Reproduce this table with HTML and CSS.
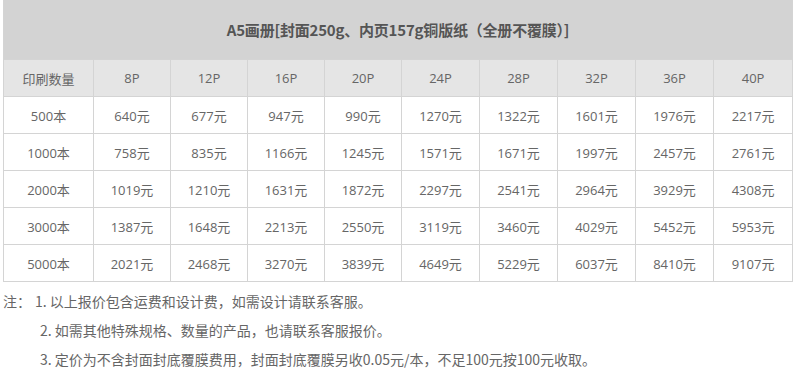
FILE: index.html
```html
<!DOCTYPE html>
<html lang="zh-CN">
<head>
<meta charset="utf-8">
<link rel="stylesheet" href="styles.css">
</head>
<body>
<div class="page">
  <table class="price">
    <colgroup>
      <col class="c1"><col class="c77"><col class="c77"><col class="c77"><col class="c77"><col class="c78"><col class="c78"><col class="c78"><col class="c78"><col class="c79">
    </colgroup>
    <tr class="title-row"><th colspan="10">A5画册[封面250g、内页157g铜版纸（全册不覆膜）]</th></tr>
    <tr class="head-row"><td>印刷数量</td><td>8P</td><td>12P</td><td>16P</td><td>20P</td><td>24P</td><td>28P</td><td>32P</td><td>36P</td><td>40P</td></tr>
    <tr><td>500本</td><td>640元</td><td>677元</td><td>947元</td><td>990元</td><td>1270元</td><td>1322元</td><td>1601元</td><td>1976元</td><td>2217元</td></tr>
    <tr><td>1000本</td><td>758元</td><td>835元</td><td>1166元</td><td>1245元</td><td>1571元</td><td>1671元</td><td>1997元</td><td>2457元</td><td>2761元</td></tr>
    <tr><td>2000本</td><td>1019元</td><td>1210元</td><td>1631元</td><td>1872元</td><td>2297元</td><td>2541元</td><td>2964元</td><td>3929元</td><td>4308元</td></tr>
    <tr><td>3000本</td><td>1387元</td><td>1648元</td><td>2213元</td><td>2550元</td><td>3119元</td><td>3460元</td><td>4029元</td><td>5452元</td><td>5953元</td></tr>
    <tr><td>5000本</td><td>2021元</td><td>2468元</td><td>3270元</td><td>3839元</td><td>4649元</td><td>5229元</td><td>6037元</td><td>8410元</td><td>9107元</td></tr>
  </table>
  <div class="notes">
    <p><span class="label">注：</span>1. 以上报价包含运费和设计费，如需设计请联系客服。</p>
    <p class="indent">2. 如需其他特殊规格、数量的产品，也请联系客服报价。</p>
    <p class="indent">3. 定价为不含封面封底覆膜费用，封面封底覆膜另收0.05元/本，不足100元按100元收取。</p>
  </div>
</div>
</body>
</html>
```
FILE: styles.css
```css
html, body {
  margin: 0;
  padding: 0;
  background: #fff;
}
body {
  font-family: "Noto Sans CJK SC", "Open Sans", sans-serif;
  color: #666;
}
.page {
  padding: 0 3px;
}
.price {
  border-collapse: collapse;
  table-layout: fixed;
  width: 790px;
  font-family: "Open Sans", "Noto Sans CJK SC", sans-serif;
  font-size: 13px;
}
.c1 { width: 90px; }
.c77 { width: 77px; }
.c78 { width: 78px; }
.c79 { width: 79px; }
.price td, .price th {
  border: 1px solid #d4d4d4;
  text-align: center;
  padding: 0;
  height: 36px;
}
.title-row th {
  background: #d3d3d3;
  height: 59px;
  border-top: none;
  font-size: 15px;
  font-weight: bold;
  color: #555;
  letter-spacing: -0.2px;
  font-family: "Noto Sans CJK SC", "Open Sans", sans-serif;
}
.head-row td {
  background: #e5e5e5;
}
.notes {
  font-size: 14px;
  margin-top: 9px;
}
.notes p {
  margin: 0;
  height: 29px;
  line-height: 20px;
}
.label {
  margin-right: 4px;
}
.indent {
  padding-left: 37px;
}
```
